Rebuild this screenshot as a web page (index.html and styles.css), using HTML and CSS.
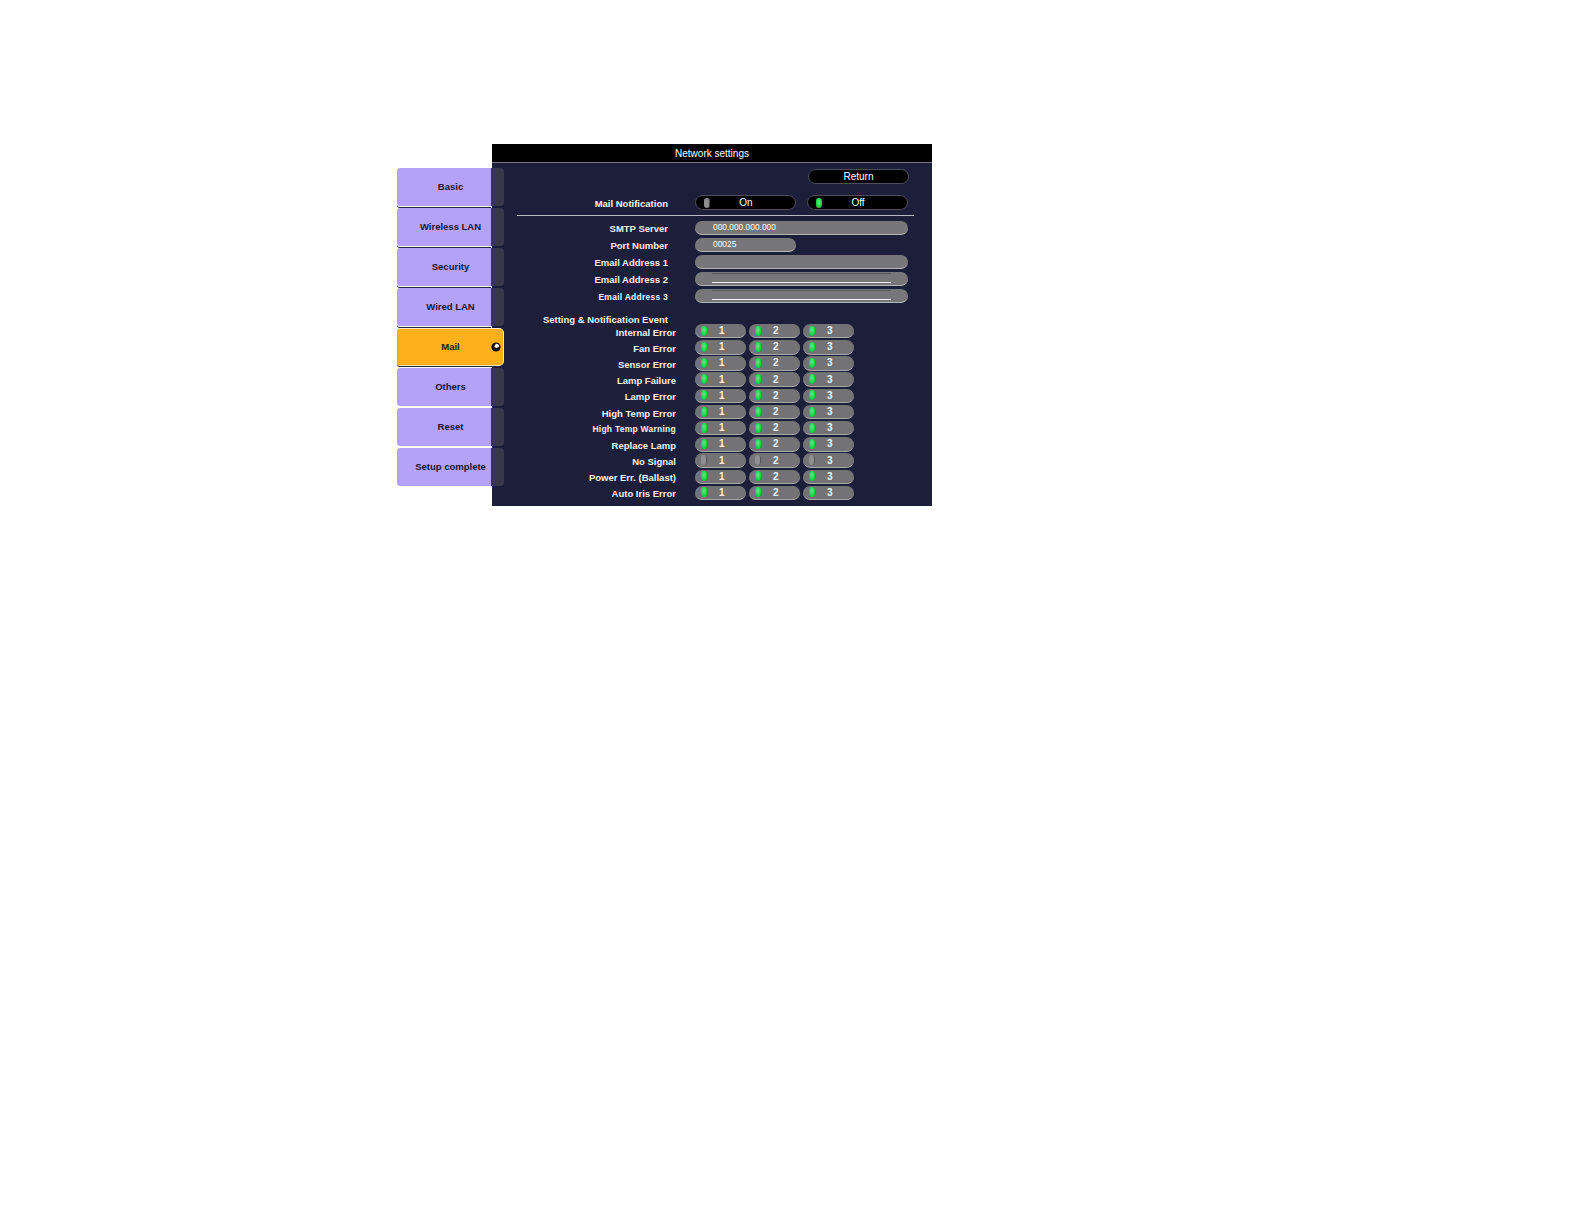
FILE: index.html
```html
<!DOCTYPE html>
<html lang="en">
<head>
    <meta charset="UTF-8">
    <title>Network settings</title>
    <link rel="stylesheet" href="styles.css">
</head>
<body>

<div class="screen">
    <div class="sidebar">
        <div class="tab tab-dark"><div class="tab-label">Basic</div><div class="tab-stub"></div></div>
        <div class="tab tab-dark"><div class="tab-label">Wireless LAN</div><div class="tab-stub"></div></div>
        <div class="tab tab-dark"><div class="tab-label">Security</div><div class="tab-stub"></div></div>
        <div class="tab tab-dark"><div class="tab-label">Wired LAN</div><div class="tab-stub"></div></div>
        <div class="tab tab-active">
            <div class="tab-label">Mail</div>
            <svg class="lens" viewBox="0 0 10 10" width="10" height="10">
                <circle cx="5" cy="5" r="4.6" fill="#0c0c0c"/>
                <path d="M5 1.8A3.2 3.2 0 0 1 8.2 5L5 6 3.2 4.2Z" fill="#fff"/>
            </svg>
        </div>
        <div class="tab"><div class="tab-label">Others</div><div class="tab-stub"></div></div>
        <div class="tab"><div class="tab-label">Reset</div><div class="tab-stub"></div></div>
        <div class="tab"><div class="tab-label">Setup complete</div><div class="tab-stub"></div></div>
    </div>

    <div class="panel">
        <div class="panel-title">Network settings</div>

        <div class="return-row">
            <div class="btn-black btn-return">Return</div>
        </div>

        <div class="row mail-row">
            <div class="label">Mail Notification</div>
            <div class="btn-black"><span class="led led-off"></span><span class="btn-text">On</span></div>
            <div class="btn-black btn-second"><span class="led"></span><span class="btn-text">Off</span></div>
        </div>

        <div class="divider"></div>

        <div class="row field-row">
            <div class="label">SMTP Server</div>
            <div class="field field-wide">000.000.000.000</div>
        </div>
        <div class="row field-row">
            <div class="label">Port Number</div>
            <div class="field">00025</div>
        </div>
        <div class="row field-row">
            <div class="label">Email Address 1</div>
            <div class="field field-wide"></div>
        </div>
        <div class="row field-row">
            <div class="label">Email Address 2</div>
            <div class="field field-wide field-empty"></div>
        </div>
        <div class="row field-row">
            <div class="label small">Email Address 3</div>
            <div class="field field-wide field-empty"></div>
        </div>

        <div class="event-heading">Setting &amp; Notification Event</div>

        <div class="row event-row">
            <div class="label">Internal Error</div>
            <div class="pill"><span class="led"></span>1</div>
            <div class="pill"><span class="led"></span>2</div>
            <div class="pill"><span class="led"></span>3</div>
        </div>
        <div class="row event-row">
            <div class="label">Fan Error</div>
            <div class="pill"><span class="led"></span>1</div>
            <div class="pill"><span class="led"></span>2</div>
            <div class="pill"><span class="led"></span>3</div>
        </div>
        <div class="row event-row">
            <div class="label">Sensor Error</div>
            <div class="pill"><span class="led"></span>1</div>
            <div class="pill"><span class="led"></span>2</div>
            <div class="pill"><span class="led"></span>3</div>
        </div>
        <div class="row event-row">
            <div class="label">Lamp Failure</div>
            <div class="pill"><span class="led"></span>1</div>
            <div class="pill"><span class="led"></span>2</div>
            <div class="pill"><span class="led"></span>3</div>
        </div>
        <div class="row event-row">
            <div class="label">Lamp Error</div>
            <div class="pill"><span class="led"></span>1</div>
            <div class="pill"><span class="led"></span>2</div>
            <div class="pill"><span class="led"></span>3</div>
        </div>
        <div class="row event-row">
            <div class="label">High Temp Error</div>
            <div class="pill"><span class="led"></span>1</div>
            <div class="pill"><span class="led"></span>2</div>
            <div class="pill"><span class="led"></span>3</div>
        </div>
        <div class="row event-row">
            <div class="label small">High Temp Warning</div>
            <div class="pill"><span class="led"></span>1</div>
            <div class="pill"><span class="led"></span>2</div>
            <div class="pill"><span class="led"></span>3</div>
        </div>
        <div class="row event-row">
            <div class="label">Replace Lamp</div>
            <div class="pill"><span class="led"></span>1</div>
            <div class="pill"><span class="led"></span>2</div>
            <div class="pill"><span class="led"></span>3</div>
        </div>
        <div class="row event-row">
            <div class="label">No Signal</div>
            <div class="pill"><span class="led led-dim"></span>1</div>
            <div class="pill"><span class="led led-dim"></span>2</div>
            <div class="pill"><span class="led led-dim"></span>3</div>
        </div>
        <div class="row event-row">
            <div class="label">Power Err. (Ballast)</div>
            <div class="pill"><span class="led"></span>1</div>
            <div class="pill"><span class="led"></span>2</div>
            <div class="pill"><span class="led"></span>3</div>
        </div>
        <div class="row event-row">
            <div class="label">Auto Iris Error</div>
            <div class="pill"><span class="led"></span>1</div>
            <div class="pill"><span class="led"></span>2</div>
            <div class="pill"><span class="led"></span>3</div>
        </div>
    </div>
</div>

</body>
</html>
```

FILE: styles.css
```css
body {
    margin: 0;
    background-color: #fff;
    font-family: "Liberation Sans", Arial, sans-serif;
    font-size: 9.5px;
    font-weight: bold;
}

.screen {
    display: flex;
    margin: 144px 0 0 397px;
    width: 535px;
    height: 362px;
}

/* Left tabs */
.sidebar {
    position: relative;
    z-index: 1;
    flex: none;
    width: 107px;
    margin-right: -12px;
    padding-top: 24px;
}

.tab {
    display: flex;
    align-items: stretch;
    height: 38px;
    margin-bottom: 2px;
    color: #16163a;
}

.tab-label {
    box-sizing: border-box;
    width: 94px;
    padding-left: 13px;
    background-color: #b4a2f8;
    border-radius: 3px 0 0 3px;
    text-align: center;
    line-height: 38px;
    white-space: nowrap;
}

.tab-stub {
    width: 13px;
    background-color: #383849;
    border-radius: 0 4px 4px 0;
}

.tab-dark .tab-label {
    box-shadow: 0 1px 0 #fff, 0 2px 0 #23233a;
}

.tab-active {
    box-sizing: border-box;
    align-items: center;
    background-color: #fdb019;
    border: 1px solid #fdeab8;
    border-left: none;
    border-radius: 3px 5px 5px 3px;
    color: #2a1a10;
    box-shadow: 0 1px 0 #23233a;
}

.tab-active .tab-label {
    background: none;
    line-height: 36px;
}

/* Main panel */
.panel {
    flex: none;
    width: 440px;
    height: 362px;
    background-color: #1c1e3a;
    color: #f4f4f4;
    overflow: hidden;
}

.panel-title {
    box-sizing: border-box;
    height: 19px;
    background-color: #000;
    border-bottom: 1px solid #77777f;
    color: #fff;
    font-size: 10px;
    font-weight: normal;
    line-height: 20px;
    text-align: center;
}

.return-row {
    margin: 6px 0 0 316px;
}

.row {
    display: flex;
    align-items: center;
}

.label {
    flex: none;
    width: 176px;
    margin-right: 27px;
    padding-top: 1px;
    text-align: right;
    white-space: nowrap;
}

.label.small {
    font-size: 8.5px;
    letter-spacing: 0.25px;
}

.btn-black {
    box-sizing: border-box;
    display: flex;
    align-items: center;
    width: 101px;
    height: 15px;
    padding-left: 8px;
    background-color: #000;
    border: 1px solid #50505c;
    border-radius: 8px;
    color: #fff;
    font-weight: normal;
    font-size: 10px;
}

.btn-return {
    justify-content: center;
    padding: 0;
}

.btn-second {
    margin-left: 11px;
}

.btn-text {
    flex: 1;
    padding-right: 13px;
    text-align: center;
}

.mail-row {
    margin-top: 11px;
}

.divider {
    width: 397px;
    height: 1px;
    margin: 5px 0 5px 25px;
    background-color: #b8b8c4;
}

.field-row {
    margin-bottom: 3px;
}

.field {
    box-sizing: border-box;
    width: 101px;
    height: 14px;
    padding-left: 18px;
    background-color: #777779;
    border-bottom: 1px solid #b5b5b5;
    border-radius: 7px;
    color: #fff;
    font-size: 8.4px;
    font-weight: normal;
    line-height: 12px;
}

.field-wide {
    width: 213px;
}

.field-empty {
    position: relative;
}

/* thin lines inside the empty address boxes */
.field-empty::before,
.field-empty::after {
    content: "";
    position: absolute;
    left: 17px;
    right: 17px;
    height: 1px;
}

.field-empty::before {
    top: 1px;
    background-color: #5a5a5e;
}

.field-empty::after {
    bottom: 2px;
    background-color: #eee;
}

.event-heading {
    width: 176px;
    margin-top: 12px;
    margin-bottom: -1px;
    height: 9px;
    line-height: 9px;
    text-align: right;
    white-space: nowrap;
}

.event-row {
    height: 16.2px;
}

.event-row .label {
    width: 184px;
    margin-right: 19px;
    padding-top: 2px;
}

.pill {
    box-sizing: border-box;
    display: flex;
    align-items: center;
    width: 51px;
    height: 14.5px;
    margin-right: 3px;
    padding-left: 6px;
    background-color: #737375;
    border-bottom: 1px solid #a9a9a9;
    border-radius: 8px;
    color: #f6f6f6;
    font-size: 10px;
    font-weight: bold;
}

.led {
    flex: none;
    width: 6px;
    height: 10px;
    background: radial-gradient(ellipse at 50% 40%, #5cf08a 0, #14cc44 65%, #0d9a33 100%);
    border-radius: 3px;
}

.pill .led {
    margin-right: 12px;
}

.led-off {
    background: #8d8d8d;
    border-right: 1px solid #444;
    box-sizing: border-box;
}

.led.led-dim {
    background: #8f8f8f;
    border-right: 1px solid #555;
    box-sizing: border-box;
}
```
